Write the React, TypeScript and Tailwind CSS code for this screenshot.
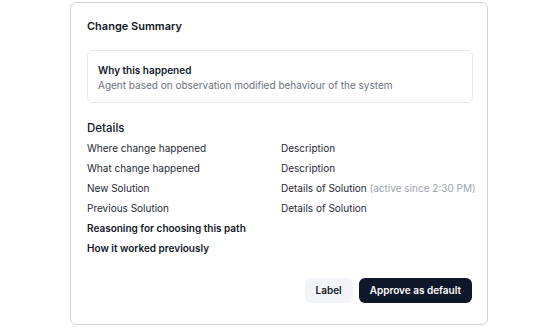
const rows = [
  { label: "Where change happened", value: "Description" },
  { label: "What change happened", value: "Description" },
  { label: "New Solution", value: "Details of Solution", note: "(active since 2:30 PM)" },
  { label: "Previous Solution", value: "Details of Solution" },
];

export default function App() {
  return (
    <div className="w-[558px] h-[328px] bg-white font-['Inter',sans-serif] pt-[2px] pl-[70px]">
      <div className="w-[418px] h-[323px] rounded-md border border-[#d4d4d8] pl-[16px] pr-[14px] pt-[15px] flex flex-col">
        <h2 className="text-[11px] font-semibold text-[#111827] leading-[16px]">Change Summary</h2>

        <div className="mt-[16px] h-[53px] rounded-md border border-[#e5e7eb] px-[10px] pt-[12px]">
          <div className="text-[10px] font-semibold text-[#111827] leading-[14px]">Why this happened</div>
          <div className="mt-[1px] text-[10px] text-[#6b7280] leading-[14px]">
            Agent based on observation modified behaviour of the system
          </div>
        </div>

        <h3 className="mt-[17px] text-[11.5px] font-medium text-[#111827] leading-[16px]">Details</h3>

        <div className="mt-[2px] flex flex-col">
          {rows.map((r) => (
            <div key={r.label} className="flex h-[20px] items-center text-[10px] text-[#1f2937] whitespace-nowrap">
              <span className="w-[194px] shrink-0">{r.label}</span>
              <span className="shrink-0">
                {r.value}
                {r.note && <span className="text-[#9ca3af]"> {r.note}</span>}
              </span>
            </div>
          ))}
          <div className="flex h-[20px] items-center text-[10px] font-semibold text-[#111827]">
            Reasoning for choosing this path
          </div>
          <div className="flex h-[20px] items-center text-[10px] font-semibold text-[#111827]">
            How it worked previously
          </div>
        </div>

        <div className="mt-[20px] flex justify-end gap-[6px] pr-[1px]">
          <button className="h-[25px] px-[11px] rounded-md bg-[#f1f5f9] text-[10px] font-semibold text-[#111827]">
            Label
          </button>
          <button className="h-[25px] px-[11px] rounded-md bg-[#0f172a] text-[10px] font-semibold text-white">
            Approve as default
          </button>
        </div>
      </div>
    </div>
  );
}
